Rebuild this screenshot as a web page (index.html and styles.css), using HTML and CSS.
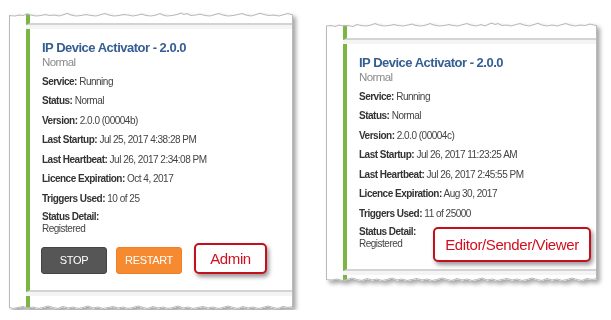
FILE: index.html
```html
<!DOCTYPE html>
<html>
<head>
    <link rel="stylesheet" href="styles.css">
</head>
<body>
    <div class="shot shot-admin">
        <div class="paper">
            <div class="stack">
                <div class="stub"></div>
                <div class="card">
                    <h3 class="card-title">IP Device Activator - 2.0.0</h3>
                    <div class="card-state">Normal</div>
                    <div class="row"><b>Service:</b> Running</div>
                    <div class="row"><b>Status:</b> Normal</div>
                    <div class="row"><b>Version:</b> 2.0.0 (00004b)</div>
                    <div class="row"><b>Last Startup:</b> Jul 25, 2017 4:38:28 PM</div>
                    <div class="row"><b>Last Heartbeat:</b> Jul 26, 2017 2:34:08 PM</div>
                    <div class="row"><b>Licence Expiration:</b> Oct 4, 2017</div>
                    <div class="row"><b>Triggers Used:</b> 10 of 25</div>
                    <div class="detail">
                        <b>Status Detail:</b>
                        <div class="detail-value">Registered</div>
                    </div>
                    <div class="actions">
                        <button class="btn btn-stop">STOP</button>
                        <button class="btn btn-restart">RESTART</button>
                        <span class="callout callout-admin">Admin</span>
                    </div>
                </div>
                <div class="stub stub-end"></div>
            </div>
            <svg class="edge" viewBox="0 0 284 298" preserveAspectRatio="none">
                <path d="M0,3 L6,3.5 L10,2.5 L14,3 L18,1.5 L22,2.5 L27,3.5 L32,3 L36,2 L41,3 L46,2.5 L50,3.5 L55,2 L58,0.8 L62,2.5 L67,3.5 L72,3 L77,2 L82,3 L87,3.5 L92,2 L96,1 L100,2.5 L105,3.5 L110,3 L114,2 L119,2.5 L124,3.5 L129,2.5 L133,1.5 L137,3 L142,3.5 L147,2.5 L151,1 L154,2.5 L158,3.5 L163,3 L168,2 L172,0.5 L175,2 L178,1 L182,3 L187,2.5 L191,1.5 L196,3 L201,3.5 L206,2 L210,1 L214,2.5 L219,3.5 L224,3 L229,2 L233,1 L237,2.5 L242,3.5 L247,2 L251,0.8 L255,2 L260,3 L265,2.5 L270,3.5 L275,2 L279,1 L284,2.5 L284,295 L279,296 L274,295 L269,297 L264,296 L259,294.5 L254,296 L249,297 L244,295.5 L239,296.5 L234,295 L229,297 L224,296 L219,294.5 L214,296 L209,297 L204,295.5 L199,296.5 L194,295 L189,296 L184,297 L179,295.5 L174,296.5 L169,294.5 L164,296 L159,297 L154,295.5 L149,296.5 L144,295 L139,297 L134,296 L129,294.5 L124,296 L119,297 L114,295.5 L109,296.5 L104,295 L99,296 L94,297 L89,295.5 L84,296.5 L79,294.5 L74,296 L69,297 L64,295.5 L59,296.5 L54,295 L49,297 L44,296 L39,294.5 L34,296 L29,297 L24,295.5 L19,296.5 L14,295 L9,296 L4,297 L0,296 Z"/>
            </svg>
        </div>
    </div>

    <div class="shot shot-viewer">
        <div class="paper">
            <div class="stack">
                <div class="stub"></div>
                <div class="card card-viewer">
                    <h3 class="card-title">IP Device Activator - 2.0.0</h3>
                    <div class="card-state">Normal</div>
                    <div class="row"><b>Service:</b> Running</div>
                    <div class="row"><b>Status:</b> Normal</div>
                    <div class="row"><b>Version:</b> 2.0.0 (00004c)</div>
                    <div class="row"><b>Last Startup:</b> Jul 26, 2017 11:23:25 AM</div>
                    <div class="row"><b>Last Heartbeat:</b> Jul 26, 2017 2:45:55 PM</div>
                    <div class="row"><b>Licence Expiration:</b> Aug 30, 2017</div>
                    <div class="row"><b>Triggers Used:</b> 11 of 25000</div>
                    <div class="detail">
                        <b>Status Detail:</b>
                        <div class="detail-value">Registered</div>
                    </div>
                    <span class="callout callout-role">Editor/Sender/Viewer</span>
                </div>
                <div class="stub stub-end"></div>
            </div>
            <svg class="edge" viewBox="0 0 271 260" preserveAspectRatio="none">
                <path d="M0,3.5 L5,3 L9,4 L13,2.5 L17,3.5 L22,3 L27,4 L31,2 L35,3 L40,3.5 L45,2.5 L49,1 L53,2.5 L58,3.5 L63,3 L68,2 L72,3 L77,3.5 L82,2.5 L86,1.5 L90,3 L95,3.5 L100,2.5 L104,1 L108,2.5 L113,3.5 L118,3 L123,2 L127,3 L132,3.5 L137,2 L141,1 L145,2.5 L150,3.5 L155,2 L159,3.5 L163,1.5 L166,0.5 L169,2 L172,1 L176,3 L181,2.5 L185,3.5 L190,2 L194,1 L198,2.5 L203,3.5 L208,2 L212,0.8 L216,2.5 L221,3.5 L226,2.5 L231,3.5 L236,2 L240,1 L244,2.5 L249,3.5 L254,2.5 L259,3 L264,1.5 L268,2.5 L271,3 L271,257 L266,258 L261,257 L256,259 L251,258 L246,256.5 L241,258 L236,259 L231,257.5 L226,258.5 L221,257 L216,259 L211,258 L206,256.5 L201,258 L196,259 L191,257.5 L186,258.5 L181,257 L176,258 L171,259 L166,257.5 L161,258.5 L156,256.5 L151,258 L146,259 L141,257.5 L136,258.5 L131,257 L126,259 L121,258 L116,256.5 L111,258 L106,259 L101,257.5 L96,258.5 L91,257 L86,258 L81,259 L76,257.5 L71,258.5 L66,256.5 L61,258 L56,259 L51,257.5 L46,258.5 L41,257 L36,259 L31,258 L26,256.5 L21,258 L16,259 L11,257.5 L6,258.5 L0,258 Z"/>
            </svg>
        </div>
    </div>
</body>
</html>
```

FILE: styles.css
```css
body {
    margin: 0;
    background: #fff;
    font-family: "Liberation Sans", Arial, sans-serif;
    color: #333;
    display: flex;
    align-items: flex-start;
}

/* torn-out screenshot pieces */
.shot {
    filter: drop-shadow(3px 3px 2px rgba(0, 0, 0, 0.35));
}

.shot-admin {
    margin: 12px 0 0 9px;
}

.shot-viewer {
    margin: 22px 0 0 33px;
}

.paper {
    position: relative;
    background: #fff;
    overflow: hidden;
}

.shot-admin .paper {
    width: 284px;
    height: 298px;
    clip-path: path('M0,3 L6,3.5 L10,2.5 L14,3 L18,1.5 L22,2.5 L27,3.5 L32,3 L36,2 L41,3 L46,2.5 L50,3.5 L55,2 L58,0.8 L62,2.5 L67,3.5 L72,3 L77,2 L82,3 L87,3.5 L92,2 L96,1 L100,2.5 L105,3.5 L110,3 L114,2 L119,2.5 L124,3.5 L129,2.5 L133,1.5 L137,3 L142,3.5 L147,2.5 L151,1 L154,2.5 L158,3.5 L163,3 L168,2 L172,0.5 L175,2 L178,1 L182,3 L187,2.5 L191,1.5 L196,3 L201,3.5 L206,2 L210,1 L214,2.5 L219,3.5 L224,3 L229,2 L233,1 L237,2.5 L242,3.5 L247,2 L251,0.8 L255,2 L260,3 L265,2.5 L270,3.5 L275,2 L279,1 L284,2.5 L284,295 L279,296 L274,295 L269,297 L264,296 L259,294.5 L254,296 L249,297 L244,295.5 L239,296.5 L234,295 L229,297 L224,296 L219,294.5 L214,296 L209,297 L204,295.5 L199,296.5 L194,295 L189,296 L184,297 L179,295.5 L174,296.5 L169,294.5 L164,296 L159,297 L154,295.5 L149,296.5 L144,295 L139,297 L134,296 L129,294.5 L124,296 L119,297 L114,295.5 L109,296.5 L104,295 L99,296 L94,297 L89,295.5 L84,296.5 L79,294.5 L74,296 L69,297 L64,295.5 L59,296.5 L54,295 L49,297 L44,296 L39,294.5 L34,296 L29,297 L24,295.5 L19,296.5 L14,295 L9,296 L4,297 L0,296 Z');
}

.shot-viewer .paper {
    width: 271px;
    height: 260px;
    clip-path: path('M0,3.5 L5,3 L9,4 L13,2.5 L17,3.5 L22,3 L27,4 L31,2 L35,3 L40,3.5 L45,2.5 L49,1 L53,2.5 L58,3.5 L63,3 L68,2 L72,3 L77,3.5 L82,2.5 L86,1.5 L90,3 L95,3.5 L100,2.5 L104,1 L108,2.5 L113,3.5 L118,3 L123,2 L127,3 L132,3.5 L137,2 L141,1 L145,2.5 L150,3.5 L155,2 L159,3.5 L163,1.5 L166,0.5 L169,2 L172,1 L176,3 L181,2.5 L185,3.5 L190,2 L194,1 L198,2.5 L203,3.5 L208,2 L212,0.8 L216,2.5 L221,3.5 L226,2.5 L231,3.5 L236,2 L240,1 L244,2.5 L249,3.5 L254,2.5 L259,3 L264,1.5 L268,2.5 L271,3 L271,257 L266,258 L261,257 L256,259 L251,258 L246,256.5 L241,258 L236,259 L231,257.5 L226,258.5 L221,257 L216,259 L211,258 L206,256.5 L201,258 L196,259 L191,257.5 L186,258.5 L181,257 L176,258 L171,259 L166,257.5 L161,258.5 L156,256.5 L151,258 L146,259 L141,257.5 L136,258.5 L131,257 L126,259 L121,258 L116,256.5 L111,258 L106,259 L101,257.5 L96,258.5 L91,257 L86,258 L81,259 L76,257.5 L71,258.5 L66,256.5 L61,258 L56,259 L51,257.5 L46,258.5 L41,257 L36,259 L31,258 L26,256.5 L21,258 L16,259 L11,257.5 L6,258.5 L0,258 Z');
}

.edge {
    position: absolute;
    left: 0;
    top: 0;
    width: 100%;
    height: 100%;
    pointer-events: none;
}

.edge path {
    fill: none;
    stroke: #b9b9b9;
    stroke-width: 2;
}

/* the card list inside the shot */
.stack {
    margin-left: 17px;
    height: 100%;
    background: #f4f4f4;
    display: flex;
    flex-direction: column;
    gap: 4px;
}

.stub {
    height: 11px;
    flex-shrink: 0;
    background: #fff;
    border-left: 4px solid #7bb544;
    border-bottom: 2px solid #d3d3d3;
}

.shot-viewer .stub {
    height: 16px;
}

.stub-end {
    flex: 1;
    border-bottom: 0;
}

.card {
    position: relative;
    flex-shrink: 0;
    background: #fff;
    border-left: 4px solid #7bb544;
    border-bottom: 2px solid #d3d3d3;
    padding: 11px 12px 16px;
    letter-spacing: -0.5px;
}

.card-viewer {
    padding-bottom: 20px;
}

.card-title {
    margin: 0;
    font-size: 13px;
    line-height: 15px;
    font-weight: bold;
    color: #355e92;
}

.card-state {
    font-size: 11.5px;
    line-height: 14px;
    letter-spacing: -0.6px;
    color: #8a8a8a;
    margin-bottom: 2px;
}

.row {
    font-size: 10px;
    line-height: 14px;
    margin-top: 5.5px;
    color: #444;
}

.row b, .detail b {
    color: #333;
}

.detail {
    font-size: 10px;
    line-height: 12px;
    margin-top: 5px;
    color: #444;
}

.detail-value {
    line-height: 11px;
}

.actions {
    display: flex;
    align-items: flex-end;
    margin-top: 9px;
    margin-left: -1px;
}

.btn {
    width: 66px;
    height: 27px;
    margin-right: 9px;
    border-radius: 3px;
    font-family: inherit;
    font-size: 11px;
    letter-spacing: -0.35px;
    color: #fff;
    padding: 0;
}

.btn-stop {
    background: #565656;
    border: 1px solid #444;
}

.btn-restart {
    background: #f68a30;
    border: 1px solid #f08026;
}

/* red annotation boxes */
.callout {
    box-sizing: border-box;
    border: 2px solid #c4101c;
    border-radius: 5px;
    background: #fff;
    color: #d0101e;
    font-size: 15px;
    letter-spacing: -0.4px;
    text-align: center;
    box-shadow: 2px 3px 4px rgba(0, 0, 0, 0.4);
}

.callout-admin {
    width: 73px;
    height: 31px;
    line-height: 27px;
    margin-left: 3px;
}

.callout-role {
    position: absolute;
    left: 86px;
    top: 183px;
    width: 158px;
    height: 35px;
    line-height: 31px;
}
```
